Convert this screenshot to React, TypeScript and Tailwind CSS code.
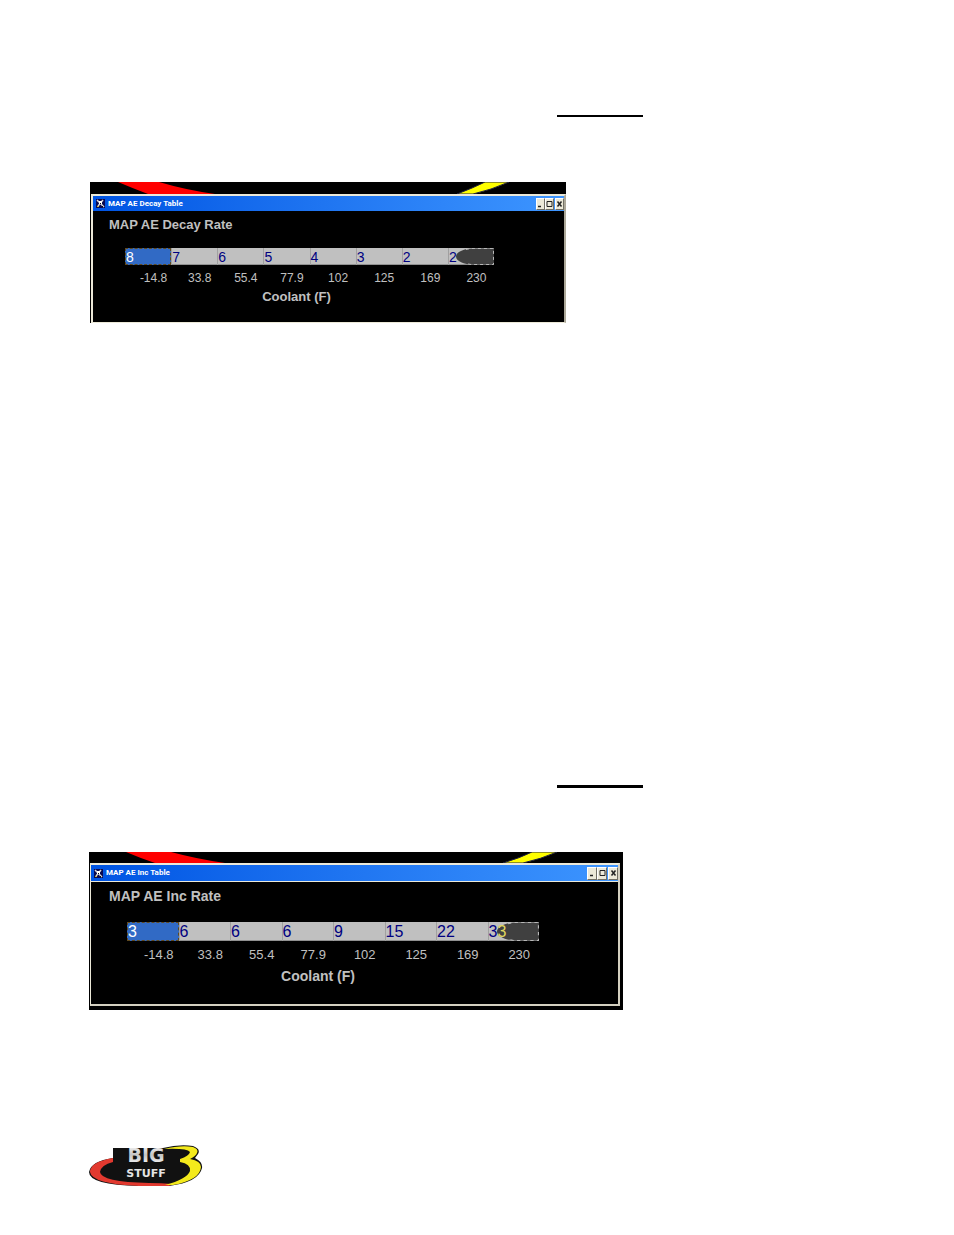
import {useId, type ReactNode} from 'react';

type TableWindowProps = {
  caption: string;
  heading: string;
  values: string[];
  large?: boolean;
};

const coolantTemps = [
  '-14.8',
  '33.8',
  '55.4',
  '77.9',
  '102',
  '125',
  '169',
  '230',
];

export default function App() {
  return (
    <main className="min-h-screen bg-white font-['Liberation_Sans',Arial,sans-serif] pb-12">
      <section className="pl-[90px] pr-6 pt-[115px]">
        <hr className="ml-[467px] w-[86px] border-0 h-[2px] bg-black" />
        <div className="mt-[65px] max-w-[476px]">
          <TableWindow
            caption="MAP AE Decay Table"
            heading="MAP AE Decay Rate"
            values={['8', '7', '6', '5', '4', '3', '2', '2']}
          />
        </div>
      </section>

      <section className="pl-[89px] pr-6 pt-[462px]">
        <hr className="ml-[468px] w-[86px] border-0 h-[3px] bg-black" />
        <div className="mt-16 max-w-[534px]">
          <TableWindow
            large
            caption="MAP AE Inc Table"
            heading="MAP AE Inc Rate"
            values={['3', '6', '6', '6', '9', '15', '22', '33']}
          />
        </div>
      </section>

      <footer className="pl-[89px] pt-[135px]">
        <Logo />
      </footer>
    </main>
  );
}

function TableWindow({caption, heading, values, large}: TableWindowProps) {
  const id = useId();
  return (
    <div className={large ? 'bg-black pb-1 pl-px pr-[3px]' : 'bg-black pl-px'}>
      <Flames large={large} />
      <div
        className={
          large
            ? 'border-t-2 border-b-2 border-l border-r-2 border-[#ece9d8] border-r-[#d4d0c0] border-b-[#d4d0c0]'
            : 'border-t-2 border-b border-l-2 border-r-2 border-[#ece9d8] border-r-[#aca899]'
        }>
        <div
          className={
            'flex items-center justify-between bg-linear-to-r from-[#0054e3] to-[#3d95ff] pl-[3px] ' +
            (large ? 'h-[17px] border-b border-[#ece9d8]' : 'h-[15px]')
          }>
          <div className="flex items-center gap-[3px]">
            <AppIcon />
            <span className="font-[Roboto,'Liberation_Sans',sans-serif] font-bold text-[8px] text-white whitespace-nowrap leading-none">
              {caption}
            </span>
          </div>
          <div className="flex">
            <WindowButton label="Minimize" large={large}>
              <path d="M1 7.500h3" strokeWidth="1.500" />
            </WindowButton>
            <WindowButton label="Maximize" large={large}>
              <path d="M1 2.500h5v5H1z" />
            </WindowButton>
            <span className="w-px" />
            <WindowButton label="Close" large={large}>
              <path d="M1.500 2.500l4 5M5.500 2.500l-4 5" strokeWidth="1.500" />
            </WindowButton>
          </div>
        </div>

        <div
          className={
            'bg-black text-[#c0c0c0] pt-[6px] ' +
            (large ? 'h-[122px] pl-[18px]' : 'h-[111px] pl-4')
          }>
          <h2
            id={id}
            className={
              'font-bold leading-4 ' + (large ? 'text-[14px]' : 'text-[13px]')
            }>
            {heading}
          </h2>
          <div
            className={
              large
                ? 'mt-[18px] ml-[18px] w-[412px]'
                : 'mt-[15px] ml-4 w-[369px]'
            }>
            <table
              aria-labelledby={id}
              className="w-full table-fixed border-collapse">
              <tbody>
                <tr>
                  {values.map((value, i) => (
                    <Cell
                      key={coolantTemps[i]}
                      value={value}
                      selected={i === 0}
                      marked={i === values.length - 1}
                      large={large}
                    />
                  ))}
                </tr>
              </tbody>
              <tfoot>
                <tr>
                  {coolantTemps.map((temp) => (
                    <th
                      key={temp}
                      scope="col"
                      className={
                        'p-0 font-normal text-center ' +
                        (large
                          ? 'h-[28px] pl-3 text-[13px]'
                          : 'h-[25px] pl-[11px] text-[12px]')
                      }>
                      {temp}
                    </th>
                  ))}
                </tr>
              </tfoot>
            </table>
            <div
              className={
                'font-bold text-center leading-[14px] ' +
                (large ? 'text-[14px] pr-[30px]' : 'text-[13px] pr-[26px]')
              }>
              Coolant (F)
            </div>
          </div>
        </div>
      </div>
    </div>
  );
}

function Cell({
  value,
  selected,
  marked,
  large,
}: {
  value: string;
  selected: boolean;
  marked: boolean;
  large?: boolean;
}) {
  const size = large
    ? 'h-[19px] text-[16px] leading-[18px]'
    : 'h-[17px] text-[14px] leading-4';
  if (selected) {
    return (
      <td
        className={
          'p-0 bg-[#316ac5] text-white outline-1 outline-dashed -outline-offset-1 outline-[#5f4a20] ' +
          size
        }>
        <span className="pl-px">{value}</span>
      </td>
    );
  }
  return (
    <td
      className={
        'relative p-0 bg-[#c0c0c0] text-[#000080] shadow-[inset_1px_0_#a0a0a0,inset_0_-1px_#909090] ' +
        size
      }>
      {marked && <Marker large={large} />}
      <span className="relative pl-px">
        {marked && large ? (
          <>
            {value[0]}
            <span className="text-[#e0d860]">{value[1]}</span>
          </>
        ) : (
          value
        )}
      </span>
    </td>
  );
}

function Marker({large}: {large?: boolean}) {
  return (
    <svg
      className={
        'absolute right-0 top-0 h-full ' + (large ? 'w-[42px]' : 'w-[38px]')
      }
      viewBox="0 0 38 17"
      preserveAspectRatio="none"
      aria-hidden="true">
      <path d="M38 .5H17C8 .5 0 4 0 8.500S8 16.500 17 16.500H38z" fill="#404040" />
      <path
        d="M10 1.500L15 .5H37.500V16.500H15L10 15.500"
        fill="none"
        stroke="#b8b8b8"
        strokeDasharray="3 3"
      />
    </svg>
  );
}

function Flames({large}: {large?: boolean}) {
  if (large) {
    return (
      <svg
        className="block h-[11px] w-full"
        viewBox="0 0 530 11"
        preserveAspectRatio="none"
        aria-hidden="true">
        <path d="M36 0H81Q107 7 135 11H65Q50 6 36 0z" fill="#f00" />
        <path
          d="M442 0H467Q451 7 433 11H413Q430 6 442 0z"
          fill="#ff0"
          stroke="#202040"
        />
      </svg>
    );
  }
  return (
    <svg
      className="block h-[12px] w-full"
      viewBox="0 0 475 12"
      preserveAspectRatio="none"
      aria-hidden="true">
      <path d="M27 0H68Q95 8 124 12H57Q41 6 27 0z" fill="#f00" />
      <path
        d="M394 0H418Q400 8 382 12H366Q382 6 394 0z"
        fill="#ff0"
        stroke="#202040"
      />
    </svg>
  );
}

function AppIcon() {
  return (
    <svg width="9" height="11" viewBox="0 0 9 11" aria-hidden="true">
      <path d="M0 1h9v9H0z" fill="#0a0a50" />
      <path d="M1 2l7 7M7 2L2 8" stroke="#d8d8d8" strokeWidth="1.500" />
      <path d="M3 3h3v3H3z" fill="#fff" />
      <path d="M4 5h1v1H4zM6 8h1v1H6z" fill="#111" />
      <path d="M1 8h2v1H1z" fill="#c9b44a" />
    </svg>
  );
}

function WindowButton({
  label,
  large,
  children,
}: {
  label: string;
  large?: boolean;
  children: ReactNode;
}) {
  return (
    <button
      type="button"
      aria-label={label}
      className={
        'flex items-center justify-center bg-[#ece9d8] border border-white border-r-[#716f64] border-b-[#716f64] ' +
        (large ? 'w-[10px] h-[13px]' : 'w-[9px] h-[12px]')
      }>
      <svg
        className="w-[7px] h-[10px]"
        viewBox="0 0 7 10"
        fill="none"
        stroke="#222"
        aria-hidden="true">
        {children}
      </svg>
    </button>
  );
}

function Logo() {
  return (
    <svg
      width="114"
      height="42"
      viewBox="0 0 114 42"
      role="img"
      aria-label="Big Stuff 3">
      <defs>
        <linearGradient id="chrome" x1="0" y1="0" x2="0" y2="1">
          <stop offset="0" stopColor="#fff" />
          <stop offset=".5" stopColor="#c4c4c4" />
          <stop offset="1" stopColor="#fff" />
        </linearGradient>
      </defs>
      {/* black body and plate */}
      <path
        d="M24 3H74Q90-1 104 1Q112 4 109 9L106 13Q114 17 113 23Q110 37 80 41H50Q0 40 0 27Q2 16 24 13z"
        fill="#111"
      />
      {/* red sweep on the left */}
      <path
        d="M24 13Q1 17 1 27Q3 39 50 41H80L84 39Q72 38 60 38Q12 37 11 27Q12 20 24 17z"
        fill="#e2392f"
      />
      {/* yellow sweep on the right */}
      <path
        d="M75 4Q92 0 104 2Q110 4 108 8Q107 11 101 14Q112 16 112 22Q111 35 84 40L76 40Q98 34 101 26Q102 19 91 17V14Q100 11 101 7Q98 3 75 4z"
        fill="#f4ea1c"
      />
      <g
        fontFamily="'DejaVu Sans', sans-serif"
        fontWeight="bold"
        textAnchor="middle">
        <text x="57" y="17" fontSize="19" fill="url(#chrome)">
          BIG
        </text>
        <text x="57" y="32" fontSize="11" fill="#e4e4e4">
          STUFF
        </text>
      </g>
    </svg>
  );
}
